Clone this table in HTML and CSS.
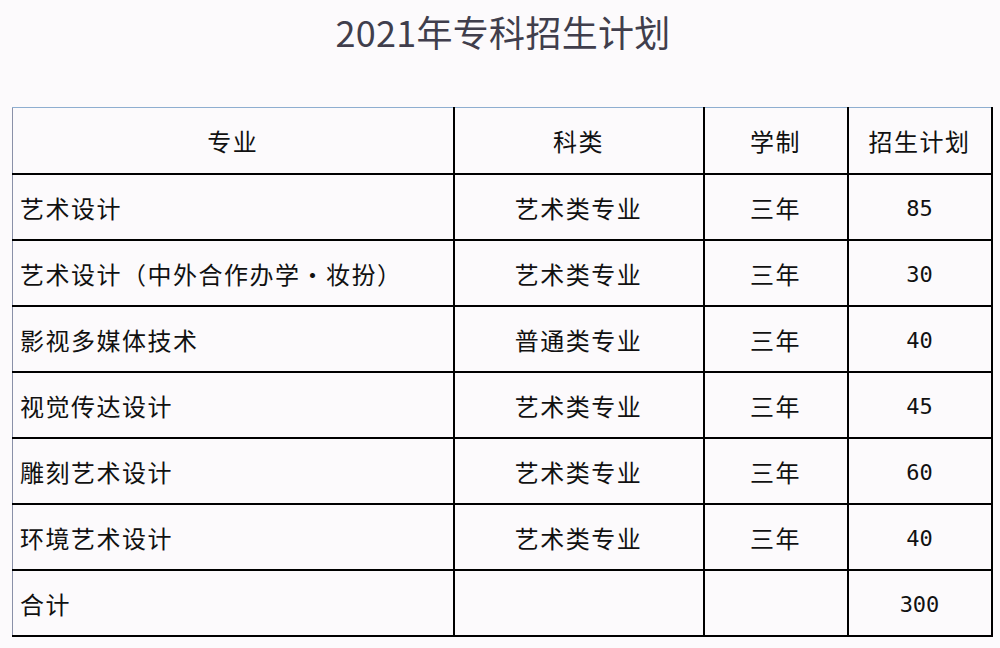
FILE: index.html
```html
<!DOCTYPE html>
<html lang="zh-CN">
<head>
<meta charset="utf-8">
<title>2021年专科招生计划</title>
<link rel="stylesheet" href="styles.css">
</head>
<body>
<div class="page">
  <h1 class="title">2021年专科招生计划</h1>
  <table class="plan">
    <colgroup>
      <col class="c1"><col class="c2"><col class="c3"><col class="c4">
    </colgroup>
    <thead>
      <tr><th>专业</th><th>科类</th><th>学制</th><th>招生计划</th></tr>
    </thead>
    <tbody>
      <tr><td class="name">艺术设计</td><td>艺术类专业</td><td>三年</td><td class="num">85</td></tr>
      <tr><td class="name">艺术设计（中外合作办学·妆扮）</td><td>艺术类专业</td><td>三年</td><td class="num">30</td></tr>
      <tr><td class="name">影视多媒体技术</td><td>普通类专业</td><td>三年</td><td class="num">40</td></tr>
      <tr><td class="name">视觉传达设计</td><td>艺术类专业</td><td>三年</td><td class="num">45</td></tr>
      <tr><td class="name">雕刻艺术设计</td><td>艺术类专业</td><td>三年</td><td class="num">60</td></tr>
      <tr><td class="name">环境艺术设计</td><td>艺术类专业</td><td>三年</td><td class="num">40</td></tr>
      <tr><td class="name">合计</td><td></td><td></td><td class="num">300</td></tr>
    </tbody>
  </table>
</div>
</body>
</html>
```
FILE: styles.css
```css
html, body {
  margin: 0;
  padding: 0;
  background: #fcfafc;
}
.page {
  width: 1000px;
  height: 648px;
  overflow: hidden;
  font-family: "Noto Sans CJK SC", "Noto Sans", sans-serif;
}
.title {
  margin: 0;
  height: 107px;
  padding-top: 10px;
  box-sizing: border-box;
  font-size: 36px;
  line-height: 42px;
  font-weight: 400;
  letter-spacing: 0.3px;
  color: #403e4c;
  text-align: center;
  padding-left: 6px;
}
.plan {
  margin-left: 12px;
  width: 980px;
  table-layout: fixed;
  border-collapse: collapse;
  font-size: 24px;
  letter-spacing: 1.5px;
  color: #111;
}
.c1 { width: 441px; }
.c2 { width: 250px; }
.c3 { width: 144px; }
.c4 { width: 144px; }
.plan th, .plan td {
  border: 2px solid #000;
  height: 64px;
  padding: 0;
  text-align: center;
  font-weight: 400;
  vertical-align: middle;
}
.plan thead th {
  border-top: 1px solid #8eaed0;
  height: 65px;
}
.plan th:first-child, .plan td:first-child {
  border-left: 1px solid #8a90a8;
}
.plan td.name {
  text-align: left;
  padding-left: 7px;
}
.plan td.num {
  font-family: "DejaVu Sans Mono", "Liberation Mono", monospace;
  font-size: 22px;
  letter-spacing: 0;
  padding-top: 2px;
  height: 62px;
}
```
